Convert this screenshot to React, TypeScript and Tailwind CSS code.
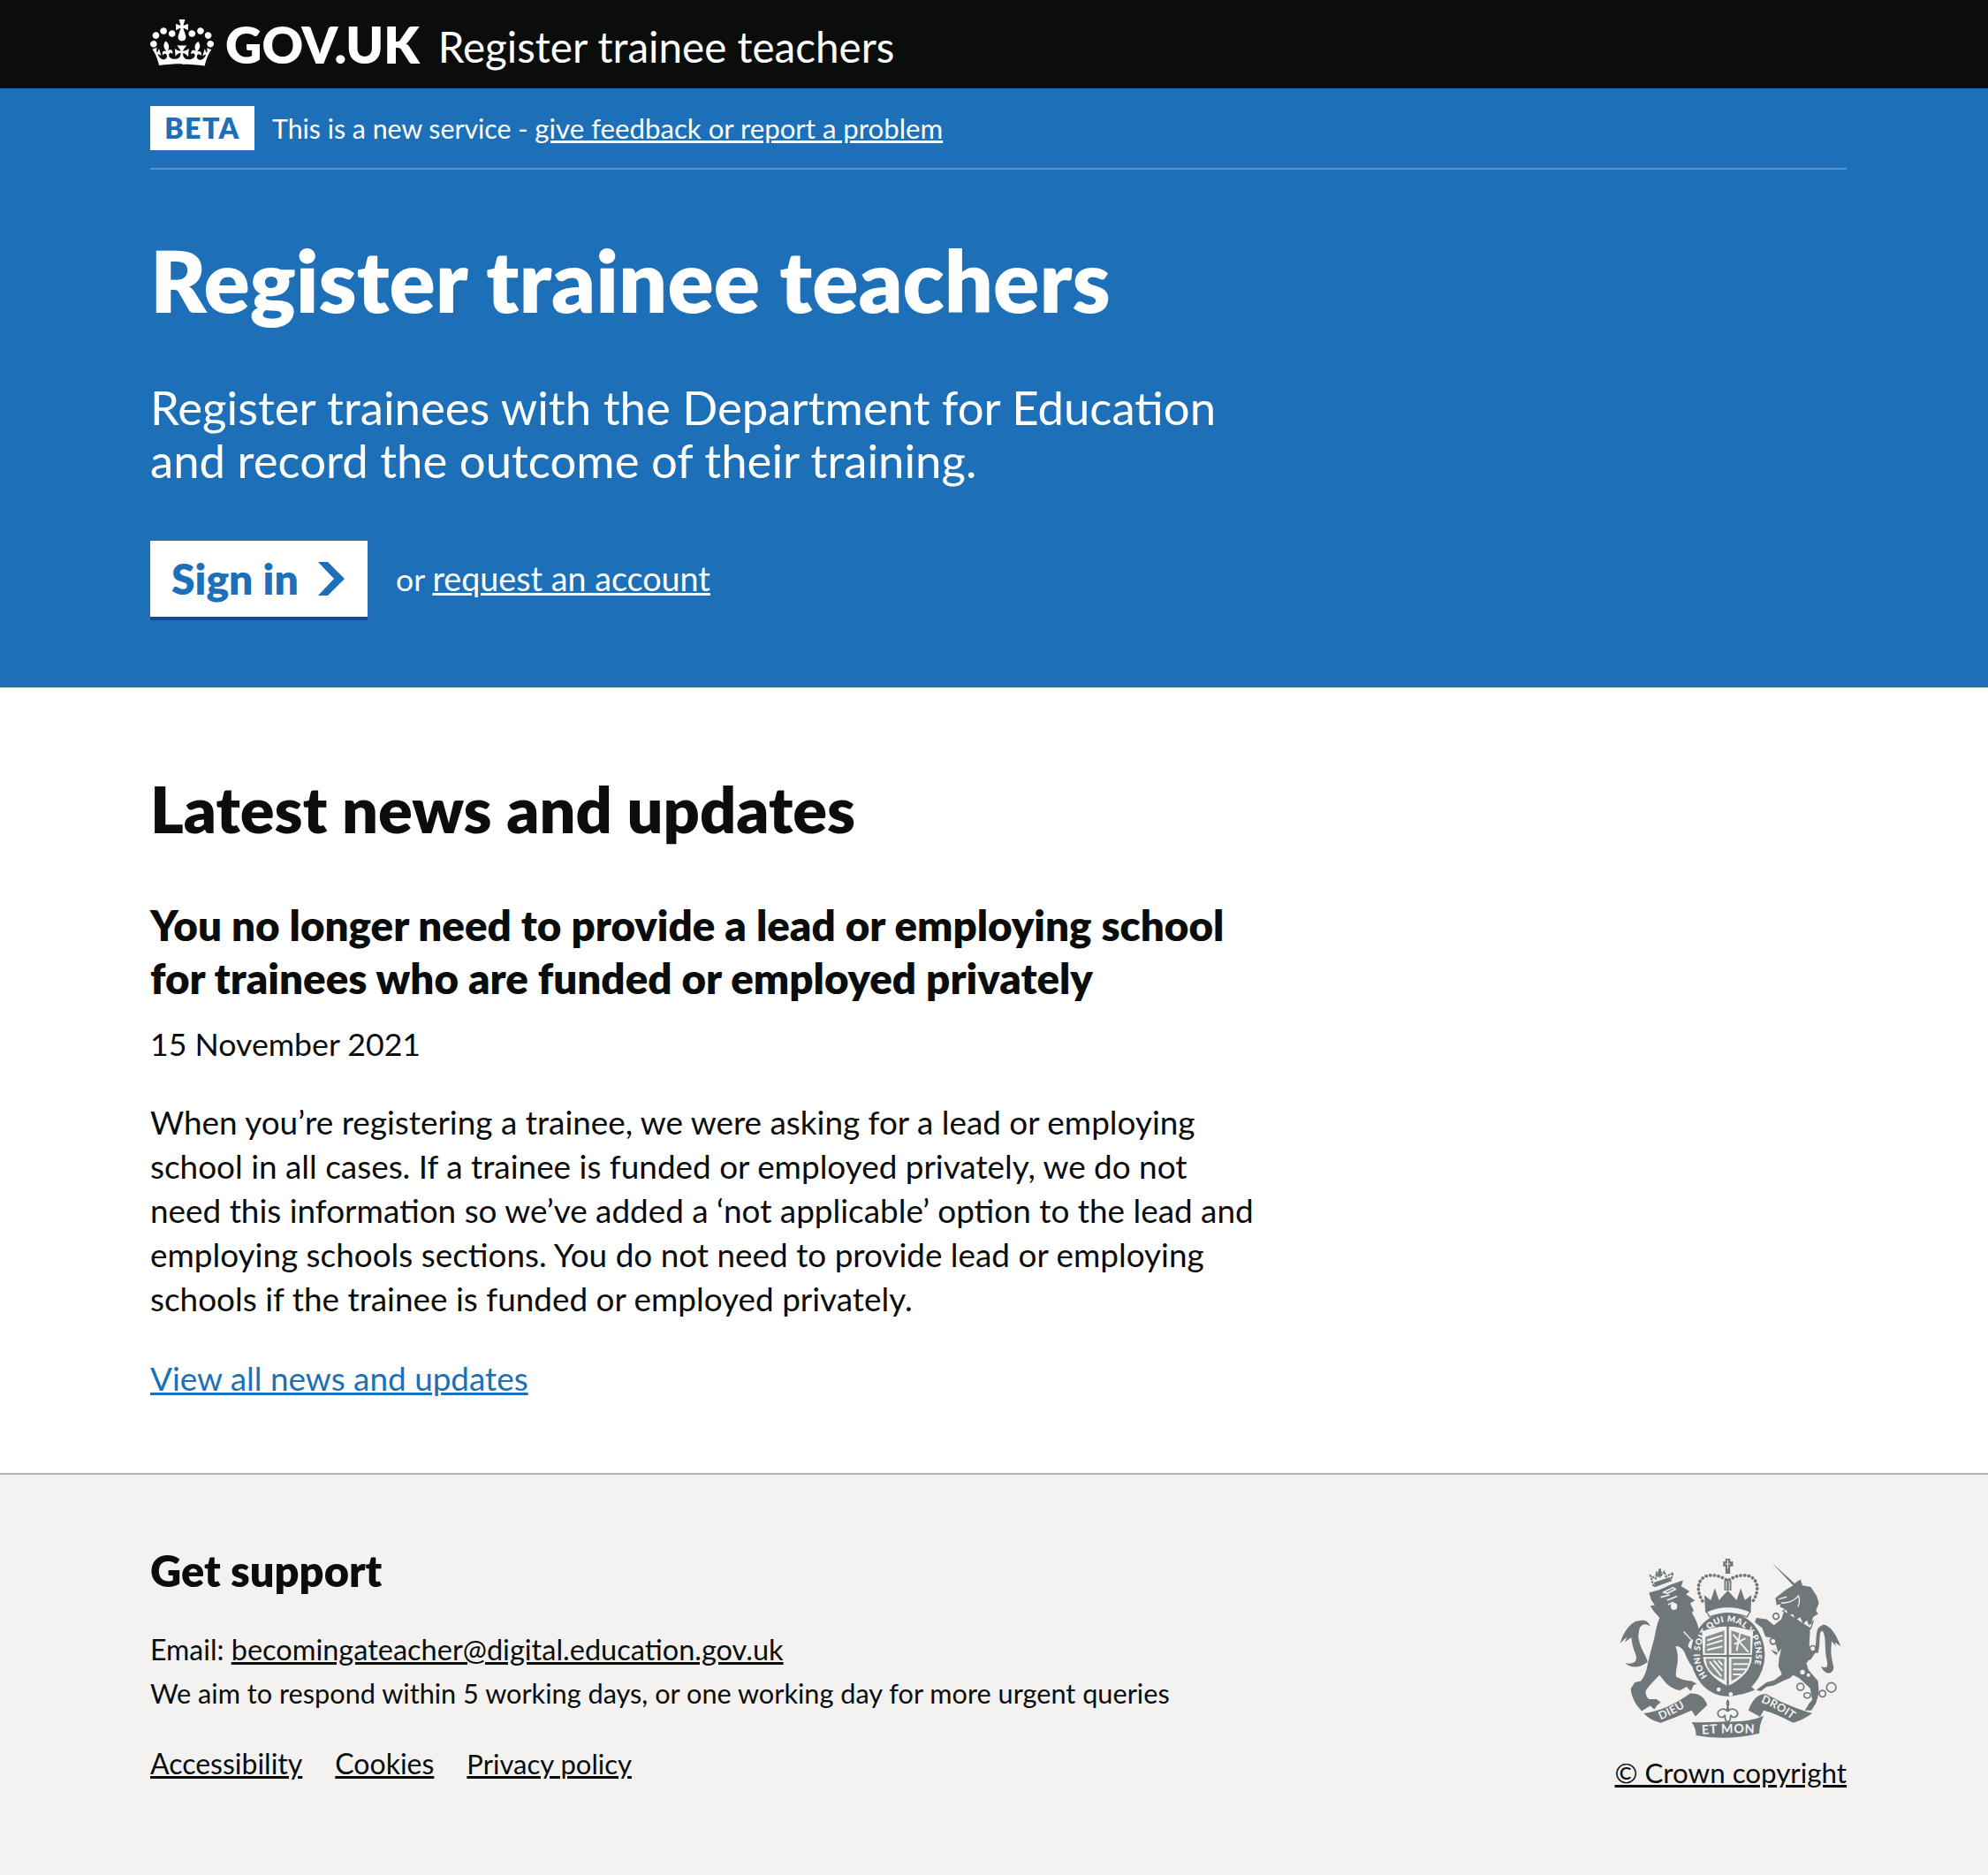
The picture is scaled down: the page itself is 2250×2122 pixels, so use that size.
function Crown() {
  return (
    <svg viewBox="0 0 132 97" className="w-[72px] h-[53px] shrink-0 mb-[4px]" fill="#fff">
      <path fillRule="evenodd" clipRule="evenodd" d="M25 30.2c3.5 1.5 7.7-.2 9.1-3.7 1.5-3.6-.2-7.8-3.9-9.2-3.6-1.4-7.6.3-9.1 3.9-1.4 3.5.3 7.5 3.9 9zM9 39.5c3.6 1.5 7.8-.2 9.2-3.7 1.5-3.6-.2-7.8-3.9-9.1-3.6-1.5-7.6.2-9.1 3.8-1.4 3.5.3 7.5 3.8 9zM4.4 57.2c3.5 1.5 7.7-.2 9.1-3.8 1.5-3.6-.2-7.7-3.9-9.1-3.5-1.5-7.6.3-9.1 3.8-1.4 3.5.3 7.6 3.9 9.1zm38.3-21.4c3.5 1.5 7.7-.2 9.1-3.8 1.5-3.6-.2-7.7-3.9-9.1-3.6-1.5-7.6.3-9.1 3.8-1.3 3.6.4 7.7 3.9 9.1zm64.4-5.6c-3.6 1.5-7.8-.2-9.1-3.7-1.5-3.6.2-7.8 3.8-9.2 3.6-1.4 7.7.3 9.2 3.9 1.3 3.5-.4 7.5-3.9 9zm15.9 9.3c-3.6 1.5-7.7-.2-9.1-3.7-1.5-3.6.2-7.8 3.7-9.1 3.6-1.5 7.7.2 9.2 3.8 1.5 3.5-.3 7.5-3.8 9zm4.7 17.7c-3.6 1.5-7.8-.2-9.2-3.8-1.5-3.6.2-7.7 3.9-9.1 3.6-1.5 7.7.3 9.2 3.8 1.3 3.5-.4 7.6-3.9 9.1zM89.3 35.8c-3.6 1.5-7.8-.2-9.2-3.8-1.4-3.6.2-7.7 3.9-9.1 3.6-1.5 7.7.3 9.2 3.8 1.4 3.6-.3 7.7-3.9 9.1zM69.7 17.7l8.9 4.7V9.3l-8.9 2.8c-.2-.3-.5-.6-.9-.9L72.4 0H59.6l3.5 11.2c-.3.3-.6.5-.9.9l-8.8-2.8v13.1l8.8-4.7c.3.3.6.7.9.9l-5 15.4v.1c-.2.8-.4 1.6-.4 2.4 0 4.1 3.1 7.5 7 8.1h.2c.3 0 .7.1 1 .1.4 0 .7 0 1-.1h.2c4-.6 7.1-4.1 7.1-8.1 0-.8-.1-1.7-.4-2.4V34l-5.1-15.4c.4-.2.7-.6 1-.9zM66 92.8c16.9 0 32.8 1.1 47.1 3.2 4-16.9 8.9-26.7 14-33.5l-9.6-3.4c1 4.9 1.1 7.2 0 10.2-1.5-1.4-3-4.3-4.2-8.7L108.6 76c2.8-2 5-3.2 7.5-3.3-4.4 9.4-10 11.9-13.6 11.2-4.3-.8-6.3-4.6-5.6-7.9 1-4.7 5.7-5.9 8-.5 4.3-8.7-3-11.4-7.6-8.8 7.1-7.2 7.9-13.5 2.1-21.1-8 6.1-8.1 12.3-4.5 20.8-4.7-5.4-12.1-2.5-9.5 6.2 3.4-5.2 7.9-2 7.2 3.1-.6 4.3-6.4 7.8-13.5 7.2-10.3-.9-10.9-8-11.2-13 2.5-.5 7.1 1.8 11 7.3L80.2 60c-4.1 4.4-8 5.3-12.3 5.4 1.4-4.4 8-11.6 8-11.6H55.5s6.4 7.2 7.9 11.6c-4.2-.1-8-1-12.3-5.4l1.4 16.4c3.9-5.5 8.5-7.7 10.9-7.3-.3 5-.7 12.1-11 13-7.2.6-12.9-2.9-13.5-7.2-.7-5 3.8-8.3 7.1-3.1 2.7-8.7-4.6-11.6-9.4-6.2 3.7-8.5 3.6-14.7-4.6-20.8-5.8 7.6-5 13.9 2.2 21.1-4.7-2.6-11.9.1-7.7 8.8 2.3-5.5 7.1-4.2 8.1.5.7 3.3-1.3 7.1-5.7 7.9-3.5.7-9-1.8-13.5-11.2 2.5.1 4.7 1.3 7.5 3.3l-4.7-15.4c-1.2 4.4-2.7 7.2-4.3 8.7-1.1-3-.9-5.3 0-10.2l-9.5 3.4c5 6.9 9.9 16.7 14 33.5 14.8-2.1 30.8-3.2 47.7-3.2z" />
    </svg>
  );
}

function Arms() {
  const c = "#6f777b";
  const bg = "#f3f2f1";
  return (
    <svg viewBox="100 65 760 625" className="w-[253px] h-[208px] mr-[4px]" fill={c}>
      {/* lion */}
      <path d="M200 190 L235 180 Q275 160 316 148 L310 168 L338 185 L326 195 L356 216 L340 226 L352 250 L346 258 Q366 290 372 325 L352 348 Q335 350 333 372 Q345 385 352 392 L375 420 L366 430 L348 442 Q330 420 322 395 Q315 378 300 372 L290 372 Q302 400 296 435 Q290 460 292 475 Q315 488 345 490 L363 500 L352 504 L342 525 L328 510 L305 522 Q270 515 252 490 L236 470 Q215 490 190 520 Q185 540 200 552 L225 552 L240 562 L228 572 L218 586 L204 574 L175 592 L158 572 Q140 545 138 516 L152 495 L172 490 Q190 470 196 430 Q205 390 218 345 Q225 300 236 275 Q215 255 204 235 L220 232 L208 215 Z" />
      <path d="M196 425 C165 450 135 445 118 428 C135 435 165 430 155 400 C140 365 132 320 152 298 C168 278 195 278 205 305 C190 292 172 295 165 318 C158 350 178 385 188 405 Z" />
      <path d="M170 285 C140 283 112 325 102 362 L125 340 L118 358 Q145 335 165 330 Z" />
      <path d="M318 322 L355 362" stroke={bg} strokeWidth="4" />
      {/* lion crown */}
      <path d="M216 168 L205 132 L222 142 L226 122 L238 135 L252 118 L258 135 L282 122 L274 148 Z" fill="none" stroke={c} strokeWidth="6" strokeDasharray="8 3" />
      <path d="M226 138 L234 108 L240 108 L245 130 Z M216 155 L272 136 L275 150 L222 170 Z" />
      <path d="M250 188 L282 172 L290 178 L262 192 Z M240 205 L270 197 M262 215 L296 202 M265 230 L284 222" stroke={bg} strokeWidth="5" fill="none" />
      <ellipse cx="285" cy="236" rx="11" ry="12" fill={bg} />
      {/* centre crown */}
      <path d="M460 125 V100 H452 V84 H460 V74 H476 V84 H486 V100 H476 V125 Z" />
      <path d="M460 92 H476 M468 78 V108" stroke={bg} strokeWidth="3" fill="none" />
      <path d="M382 218 C362 185 362 150 392 134 C420 125 450 135 468 150 C486 135 516 125 544 134 C574 150 574 185 554 218" fill="none" stroke={c} strokeWidth="11" strokeDasharray="1 13" strokeLinecap="round" />
      <path d="M456 148 H480 V182 H456 Z" />
      <path d="M463 150 V180 M473 150 V180" stroke={bg} strokeWidth="3" />
      <path d="M388 198 L410 215 L424 175 L438 215 L468 182 L498 215 L512 175 L526 215 L548 198 L546 258 Q468 228 392 258 Z" />
      <path d="M396 254 Q468 222 544 254 L534 272 Q468 248 406 272 Z" fill={bg} stroke={c} strokeWidth="4" />
      {/* garter */}
      <ellipse cx="468" cy="400" rx="126" ry="142" />
      <path d="M378 320 Q465 285 556 320 L552 410 Q548 470 468 510 Q388 470 382 410 Z" fill={bg} stroke={c} strokeWidth="4" />
      <path d="M468 298 V510 M382 405 H552" stroke={c} strokeWidth="7" />
      <path d="M392 340 L456 318 V396 H390 Z M480 318 L545 340 V396 H480 Z M392 414 H456 V488 Q412 470 398 440 Z M480 414 H543 Q538 462 480 490 Z" fill={c} opacity="0.8" />
      <path d="M398 352 L450 335 M396 368 L450 352 M398 384 L450 372 M486 332 L538 392 M510 326 L498 388 M528 345 L490 365 M486 432 H538 M486 450 H530 M486 468 H514 M406 424 L446 474 M420 420 L450 455 M436 420 L450 436" stroke={bg} strokeWidth="6" fill="none" />
      <path id="gar" d="M402 478 A95 110 0 1 1 534 478" fill="none" />
      <text fill={bg} fontSize="29" fontFamily="Lato, sans-serif" fontWeight="800" letterSpacing="1.5"><textPath href="#gar" startOffset="1%">HONI SOIT QUI MAL Y PENSE</textPath></text>
      <path d="M392 492 L402 515 Q470 560 560 520 L548 508 Q470 545 410 500 Z" />
      <circle cx="437" cy="519" r="7" fill={bg} /><circle cx="478" cy="535" r="7" fill={bg} />
      {/* unicorn */}
      <path d="M618 88 L695 158 L715 145 L722 165 L750 170 L770 200 L778 225 L768 250 L775 262 L758 272 L748 312 L745 370 L765 395 L748 420 L735 428 L742 452 L775 490 L778 530 L768 565 L752 590 L730 590 L745 565 L755 555 L748 515 L710 480 L690 470 L680 480 L655 490 L625 505 L600 510 L580 525 L565 520 L600 495 L625 488 L652 468 L640 440 L642 415 L650 380 L632 402 L615 385 L635 375 L598 345 L585 310 L560 290 L565 275 L600 280 L625 300 L650 280 L662 245 L645 238 L648 228 L634 232 L630 208 L665 180 L690 165 Z" />
      <path d="M640 212 L668 204 M650 225 Q690 225 708 200 Q716 218 706 238" stroke={bg} strokeWidth="4" fill="none" />
      <path d="M655 252 L750 312 L758 288 L745 298 L738 280 L725 292 L715 270 L700 280 L690 260 L675 265 L668 245 Z" fill={bg} stroke={c} strokeWidth="4" />
      <circle cx="632" cy="270" r="10" fill={bg} stroke={c} strokeWidth="5" />
      <circle cx="757" cy="380" r="10" fill={bg} stroke={c} strokeWidth="5" />
      <path d="M590 338 L625 345 L640 395 L605 380 Z" fill={bg} opacity="0.9" />
      <circle cx="622" cy="355" r="10" fill={bg} stroke={c} strokeWidth="5" />
      <circle cx="748" cy="426" r="8" fill={bg} /><circle cx="722" cy="460" r="8" fill={bg} /><circle cx="742" cy="470" r="6" fill={bg} />
      <path d="M762 395 C775 345 760 310 790 300 C815 298 825 330 820 370 C815 420 835 440 825 455 C815 470 795 465 785 440 C805 450 810 440 805 420 C795 380 805 340 790 320 C775 320 785 360 775 395 Z" />
      <path d="M790 298 C820 300 840 340 852 372 L832 358 L836 372 Q815 345 805 345 Z" />
      <circle cx="715" cy="510" r="12" fill="none" stroke={c} strokeWidth="5" />
      <ellipse cx="738" cy="539" rx="11" ry="9" fill="none" stroke={c} strokeWidth="5" />
      <circle cx="790" cy="533" r="11" fill="none" stroke={c} strokeWidth="5" />
      <circle cx="820" cy="512" r="16" fill="none" stroke={c} strokeWidth="5" />
      {/* motto */}
      <path d="M182 600 Q260 590 340 532 Q385 530 398 572 L358 610 L345 590 Q290 615 240 632 Q205 625 182 600 Z" />
      <path d="M345 630 Q375 632 465 628 Q545 630 590 608 Q575 640 575 668 Q465 695 360 675 Q360 650 345 630 Z" />
      <path d="M538 590 Q560 530 600 535 Q670 575 755 600 Q720 625 690 632 Q630 600 590 590 L578 612 Z" />
      <path id="m1" d="M240 622 Q290 600 345 566" fill="none" />
      <text fill={bg} fontSize="38" fontFamily="Lato, sans-serif" fontWeight="700" letterSpacing="1"><textPath href="#m1">DIEU</textPath></text>
      <path id="m2" d="M380 671 Q465 665 558 668" fill="none" />
      <text fill={bg} fontSize="43" fontFamily="Lato, sans-serif" fontWeight="700" letterSpacing="2"><textPath href="#m2">ET MON</textPath></text>
      <path id="m3" d="M580 562 Q640 585 695 628" fill="none" />
      <text fill={bg} fontSize="38" fontFamily="Lato, sans-serif" fontWeight="700" letterSpacing="1"><textPath href="#m3">DROIT</textPath></text>
      <path d="M468 556 C456 575 480 580 466 592 C455 578 435 588 434 600 C436 615 455 618 458 605 L460 622 Q468 635 476 622 L478 605 C482 618 500 615 502 600 C500 588 480 578 470 592 C456 580 480 575 468 556 Z" fill={bg} stroke={c} strokeWidth="5" />
    </svg>
  );
}

export default function App() {
  return (
    <div className="min-h-[2122px] flex flex-col bg-white text-[#0b0c0c] font-['Lato',sans-serif]">
      <header className="bg-[#0b0c0c] h-[100px] text-white">
        <div className="ml-[170px] flex items-center h-[100px]">
          <Crown />
          <span className="ml-[13px] text-[57.3px] font-extrabold leading-none">GOV.UK</span>
          <span className="ml-[21px] mt-[5px] text-[47.6px] leading-none">Register trainee teachers</span>
        </div>
      </header>
      <section className="bg-[#1d70b8] text-white h-[678px] pl-[170px] pr-[160px]">
        <div className="flex items-center h-[92px] border-b-2 border-[#5694ca]">
          <strong className="bg-white text-[#1d70b8] w-[118px] h-[50px] flex items-center justify-center text-[32px] tracking-[1.5px] font-extrabold">BETA</strong>
          <span className="ml-[20px] text-[30.3px]">This is a new service - <a className="underline text-[31.2px]">give feedback or report a problem</a></span>
        </div>
        <h1 className="mt-[75px] text-[97px] leading-[100px] font-extrabold">Register trainee teachers</h1>
        <p className="mt-[64px] text-[52.7px] leading-[60px]">Register trainees with the Department for Education<br />and record the outcome of their training.</p>
        <div className="mt-[61px] flex items-center">
          <a className="bg-white text-[#1d70b8] w-[246px] h-[86px] flex items-center pl-[24px] text-[48px] font-extrabold shadow-[0_4px_0_#144e81]">
            Sign in
            <svg viewBox="0 0 30 38" className="ml-[22px] w-[30px] h-[38px]" fill="#1d70b8"><path d="M0 0h11l19 19-19 19H0l18-19z" /></svg>
          </a>
          <span className="ml-[32px] text-[35.5px]">or <a className="underline text-[37.7px]">request an account</a></span>
        </div>
      </section>
      <main className="flex-1 pl-[170px] pr-[160px] pt-[97px]">
        <h2 className="text-[72px] leading-[80px] font-extrabold">Latest news and updates</h2>
        <h3 className="mt-[62px] text-[47.5px] leading-[60px] font-extrabold">You no longer need to provide a lead or employing school<br />for trainees who are funded or employed privately</h3>
        <p className="mt-[20px] text-[35.7px] leading-[50px]">15 November 2021</p>
        <p className="mt-[38px] text-[36.9px] leading-[50px]">When you’re registering a trainee, we were asking for a lead or employing<br />school in all cases. If a trainee is funded or employed privately, we do not<br />need this information so we’ve added a ‘not applicable’ option to the lead and<br />employing schools sections. You do not need to provide lead or employing<br />schools if the trainee is funded or employed privately.</p>
        <p className="mt-[40px] text-[36.9px] leading-[50px]"><a className="underline text-[#1d70b8]">View all news and updates</a></p>
      </main>
      <footer className="bg-[#f3f2f1] border-t-2 border-[#b1b4b6] h-[455px] pl-[170px] pr-[160px] pt-[78px] flex justify-between">
        <div>
          <h2 className="text-[48.8px] leading-[60px] font-extrabold">Get support</h2>
          <p className="mt-[35px] text-[32px] leading-[50px]">Email: <a className="underline text-[32.5px]">becomingateacher@digital.education.gov.uk</a></p>
          <p className="text-[30.7px] leading-[50px]">We aim to respond within 5 working days, or one working day for more urgent queries</p>
          <div className="mt-[29px] flex gap-[37px] text-[32px] leading-[50px]"><a className="underline">Accessibility</a><a className="underline">Cookies</a><a className="underline text-[31px]">Privacy policy</a></div>
        </div>
        <div className="flex flex-col items-end mt-[14px]">
          <Arms />
          <a className="mt-[17px] underline text-[31.3px] leading-[40px]">© Crown copyright</a>
        </div>
      </footer>
    </div>
  );
}
